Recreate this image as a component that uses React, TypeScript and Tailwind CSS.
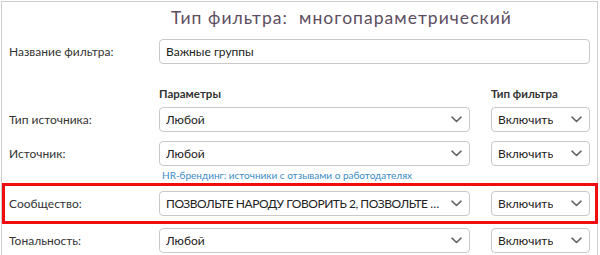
import React from "react";

function Chevron() {
  return (
    <svg width="11" height="7" viewBox="0 0 11 7" className="shrink-0">
      <path d="M1 1.2 L5.5 5.5 L10 1.2" fill="none" stroke="#666" strokeWidth="1.6" strokeLinecap="round" strokeLinejoin="round" />
    </svg>
  );
}

function Select({ text, wide, tight }: { text: string; wide?: boolean; tight?: boolean }) {
  return (
    <div
      className={
        "flex h-[25px] shrink-0 items-center justify-between gap-[6px] rounded-[4px] border border-[#c9c9c9] bg-white pl-[6px] " +
        (wide ? "w-[311px] pr-[7px]" : "w-[99px] pr-[7px]")
      }
    >
      <span className={"min-w-0 truncate whitespace-nowrap text-[12px] text-[#222]" + (tight ? " tracking-[-0.45px]" : "")}>{text}</span>
      <Chevron />
    </div>
  );
}

function Row({ label, value, tight }: { label: string; value: string; tight?: boolean }) {
  return (
    <div className="flex h-[25px] items-center">
      <div className="w-[157px] shrink-0 pl-[7px] text-[12px] text-[#333]">{label}</div>
      <Select text={value} wide tight={tight} />
      <div className="ml-[21px]">
        <Select text="Включить" />
      </div>
    </div>
  );
}

export default function App() {
  return (
    <div className="h-[255px] w-[600px] overflow-hidden bg-white" style={{ fontFamily: 'Lato, "Open Sans", sans-serif' }}>
      <div className="ml-[1px] mt-[1px] h-[260px] w-[597px] border border-[#cfcfcf]">
        <div className="flex h-[32px] items-center pl-[169px] text-[17.5px] tracking-[1.05px] text-[#5d4e5f]">
          Тип фильтра:&nbsp; многопараметрический
        </div>
        <div className="mt-[5px] flex h-[25px] items-center">
          <div className="w-[157px] shrink-0 pl-[7px] text-[12px] text-[#333]">Название фильтра:</div>
          <div className="flex h-[25px] w-[431px] items-center rounded-[4px] border border-[#c9c9c9] pl-[6px] text-[12px] text-[#222]">
            Важные группы
          </div>
        </div>
        <div className="flex h-[43px] items-end pb-[5px] text-[11.5px] font-bold text-[#333]">
          <div className="w-[157px]" />
          <div className="w-[332px]">Параметры</div>
          <div>Тип фильтра</div>
        </div>
        <Row label="Тип источника:" value="Любой" />
        <div className="mt-[9px]">
          <Row label="Источник:" value="Любой" />
        </div>
        <div className="flex h-[17px] items-end pl-[160px] text-[10px] text-[#3b8cc4]">
          HR-брендинг: источники с отзывами о работодателях
        </div>
        <div className="relative pb-[8px] pt-[8px]">
          <Row label="Сообщество:" value="ПОЗВОЛЬТЕ НАРОДУ ГОВОРИТЬ 2, ПОЗВОЛЬТЕ НАРОДУ ГОВОРИТЬ" tight />
          <div className="pointer-events-none absolute bottom-0 left-0 right-[-1px] top-0 border-[3.5px] border-[#f20d0d]" />
        </div>
        <div className="mt-[4px]">
          <Row label="Тональность:" value="Любой" />
        </div>
      </div>
    </div>
  );
}
